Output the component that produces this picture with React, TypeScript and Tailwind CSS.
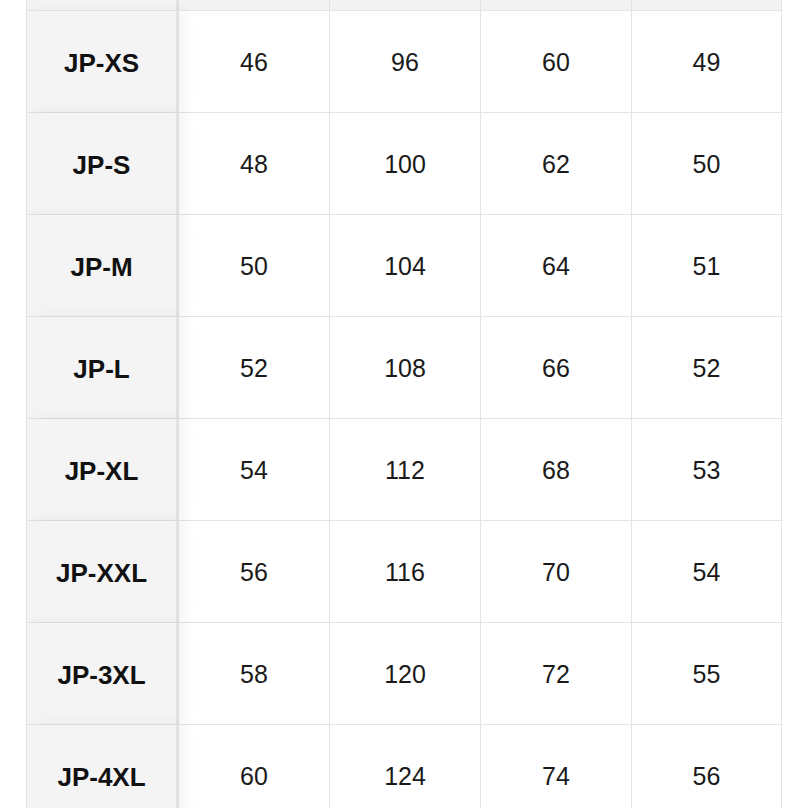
const rows: [string, number, number, number, number][] = [
  ["JP-XS", 46, 96, 60, 49],
  ["JP-S", 48, 100, 62, 50],
  ["JP-M", 50, 104, 64, 51],
  ["JP-L", 52, 108, 66, 52],
  ["JP-XL", 54, 112, 68, 53],
  ["JP-XXL", 56, 116, 70, 54],
  ["JP-3XL", 58, 120, 72, 55],
  ["JP-4XL", 60, 124, 74, 56],
];

const widths = ["w-[151px]", "w-[151px]", "w-[151px]", "w-[150px]"];

export default function App() {
  return (
    <div
      className="h-[808px] w-[808px] overflow-hidden bg-white"
      style={{ fontFamily: '"Liberation Sans", Arial, sans-serif' }}
    >
      <div className="ml-[26px] w-[757px] border-l border-[#e4e4e4]">
        <div className="flex h-[11px] border-b border-[#e4e4e4]">
          <div className="relative z-10 w-[152px] shrink-0 border-r-[3px] border-[#e2e2e2] bg-[#f4f4f4]" />
          {widths.map((w, i) => (
            <div key={i} className={`${w} shrink-0 border-r border-[#e4e4e4] bg-[#f3f3f3]`} />
          ))}
        </div>
        {rows.map(([size, a, b, c, d]) => (
          <div key={size} className="flex h-[102px] border-b border-[#e4e4e4]">
            <div className="relative z-10 flex w-[152px] shrink-0 items-center justify-center border-r-[3px] border-[#e2e2e2] bg-[#f4f4f4] pt-[3px] text-[26px] font-bold text-[#111] shadow-[6px_0_14px_rgba(0,0,0,0.05)]">
              {size}
            </div>
            {[a, b, c, d].map((v, i) => (
              <div
                key={i}
                className={`${widths[i]} flex shrink-0 items-center justify-center border-r border-[#e4e4e4] pt-[3px] text-[25px] text-[#1a1a1a]`}
              >
                {v}
              </div>
            ))}
          </div>
        ))}
      </div>
    </div>
  );
}
